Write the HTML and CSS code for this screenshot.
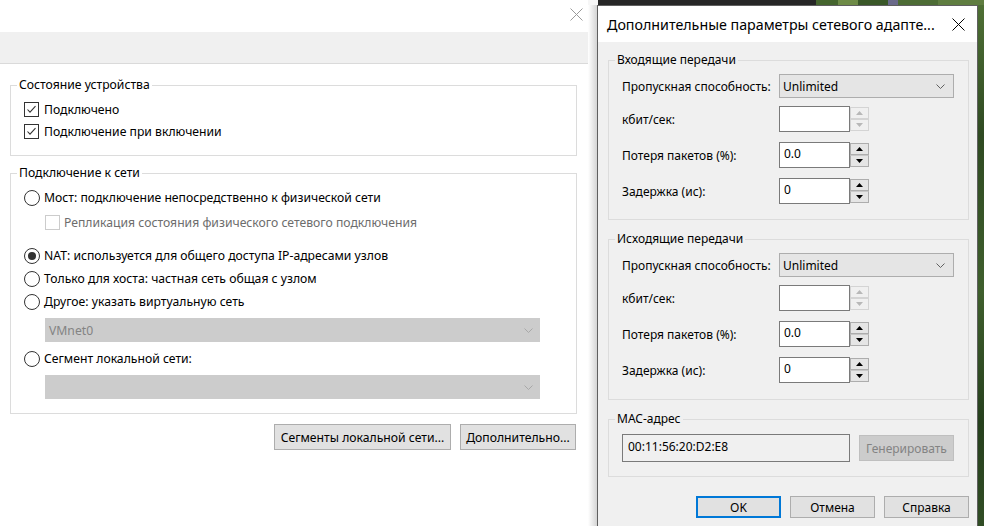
FILE: index.html
```html
<!DOCTYPE html>
<html lang="ru">
<head>
<meta charset="utf-8">
<title>Сетевой адаптер</title>
<link rel="stylesheet" href="styles.css">
</head>
<body>
<div class="screen">
  <section class="main-win">
    <div class="main-title">
      <svg class="x-icon x-gray" width="13" height="13" viewBox="0 0 13 13"><path d="M0.5 0.5 L12.5 12.5 M12.5 0.5 L0.5 12.5"/></svg>
    </div>
    <div class="main-band"></div>
    <div class="main-content">
      <fieldset class="grp grp-state">
        <legend>Состояние устройства</legend>
        <div class="grp-body state-body">
          <div class="opt"><span class="cb"><svg viewBox="0 0 13 13"><polyline points="2.5,6.5 5,9.2 10.5,3.2"/></svg></span><span>Подключено</span></div>
          <div class="opt"><span class="cb"><svg viewBox="0 0 13 13"><polyline points="2.5,6.5 5,9.2 10.5,3.2"/></svg></span><span>Подключение при включении</span></div>
        </div>
      </fieldset>
      <fieldset class="grp grp-net">
        <legend>Подключение к сети</legend>
        <div class="grp-body net-body">
          <div class="opt net-opt"><span class="rb"></span><span>Мост: подключение непосредственно к физической сети</span></div>
          <div class="opt net-opt sub dis"><span class="cb cb-dis"></span><span>Репликация состояния физического сетевого подключения</span></div>
          <div class="opt net-opt nat"><span class="rb rb-on"></span><span>NAT: используется для общего доступа IP-адресами узлов</span></div>
          <div class="opt net-opt"><span class="rb"></span><span>Только для хоста: частная сеть общая с узлом</span></div>
          <div class="opt net-opt"><span class="rb"></span><span>Другое: указать виртуальную сеть</span></div>
          <div class="combo combo-dis"><span>VMnet0</span><svg class="chev" width="9" height="5" viewBox="0 0 9 5"><polyline points="0.5,0.5 4.5,4.5 8.5,0.5"/></svg></div>
          <div class="opt net-opt seg"><span class="rb"></span><span>Сегмент локальной сети:</span></div>
          <div class="combo combo-dis"><span></span><svg class="chev" width="9" height="5" viewBox="0 0 9 5"><polyline points="0.5,0.5 4.5,4.5 8.5,0.5"/></svg></div>
        </div>
      </fieldset>
      <div class="main-btns">
        <button class="btn btn-seg">Сегменты локальной сети...</button>
        <button class="btn btn-more">Дополнительно...</button>
      </div>
    </div>
  </section>

  <div class="right">
    <div class="desk-top"></div>
    <div class="right-row">
      <div class="shadow"></div>
      <section class="dlg">
        <div class="dlg-title">
          <span>Дополнительные параметры сетевого адапте...</span>
          <svg class="x-icon" width="13" height="13" viewBox="0 0 13 13"><path d="M0.5 0.5 L12.5 12.5 M12.5 0.5 L0.5 12.5"/></svg>
        </div>
        <div class="dlg-body">
          <fieldset class="grp dgrp">
            <legend>Входящие передачи</legend>
            <div class="grp-body form-body">
              <div class="frow r-sel"><span class="flbl">Пропускная способность:</span>
                <div class="select"><span>Unlimited</span><svg class="chev dark" width="9" height="5" viewBox="0 0 9 5"><polyline points="0.5,0.5 4.5,4.5 8.5,0.5"/></svg></div>
              </div>
              <div class="frow"><span class="flbl">кбит/сек:</span>
                <div class="spin spin-dis"><div class="spin-input"></div><div class="spin-btns"><span class="sbtn"><svg width="7" height="4" viewBox="0 0 7 4"><polygon points="0,4 3.5,0 7,4"/></svg></span><span class="sbtn"><svg width="7" height="4" viewBox="0 0 7 4"><polygon points="0,0 7,0 3.5,4"/></svg></span></div></div>
              </div>
              <div class="frow"><span class="flbl">Потеря пакетов (%):</span>
                <div class="spin"><div class="spin-input">0.0</div><div class="spin-btns"><span class="sbtn"><svg width="7" height="4" viewBox="0 0 7 4"><polygon points="0,4 3.5,0 7,4"/></svg></span><span class="sbtn"><svg width="7" height="4" viewBox="0 0 7 4"><polygon points="0,0 7,0 3.5,4"/></svg></span></div></div>
              </div>
              <div class="frow"><span class="flbl">Задержка (ис):</span>
                <div class="spin"><div class="spin-input">0</div><div class="spin-btns"><span class="sbtn"><svg width="7" height="4" viewBox="0 0 7 4"><polygon points="0,4 3.5,0 7,4"/></svg></span><span class="sbtn"><svg width="7" height="4" viewBox="0 0 7 4"><polygon points="0,0 7,0 3.5,4"/></svg></span></div></div>
              </div>
            </div>
          </fieldset>

          <fieldset class="grp dgrp dgrp-out">
            <legend>Исходящие передачи</legend>
            <div class="grp-body form-body">
              <div class="frow r-sel"><span class="flbl">Пропускная способность:</span>
                <div class="select"><span>Unlimited</span><svg class="chev dark" width="9" height="5" viewBox="0 0 9 5"><polyline points="0.5,0.5 4.5,4.5 8.5,0.5"/></svg></div>
              </div>
              <div class="frow"><span class="flbl">кбит/сек:</span>
                <div class="spin spin-dis"><div class="spin-input"></div><div class="spin-btns"><span class="sbtn"><svg width="7" height="4" viewBox="0 0 7 4"><polygon points="0,4 3.5,0 7,4"/></svg></span><span class="sbtn"><svg width="7" height="4" viewBox="0 0 7 4"><polygon points="0,0 7,0 3.5,4"/></svg></span></div></div>
              </div>
              <div class="frow"><span class="flbl">Потеря пакетов (%):</span>
                <div class="spin"><div class="spin-input">0.0</div><div class="spin-btns"><span class="sbtn"><svg width="7" height="4" viewBox="0 0 7 4"><polygon points="0,4 3.5,0 7,4"/></svg></span><span class="sbtn"><svg width="7" height="4" viewBox="0 0 7 4"><polygon points="0,0 7,0 3.5,4"/></svg></span></div></div>
              </div>
              <div class="frow"><span class="flbl">Задержка (ис):</span>
                <div class="spin"><div class="spin-input">0</div><div class="spin-btns"><span class="sbtn"><svg width="7" height="4" viewBox="0 0 7 4"><polygon points="0,4 3.5,0 7,4"/></svg></span><span class="sbtn"><svg width="7" height="4" viewBox="0 0 7 4"><polygon points="0,0 7,0 3.5,4"/></svg></span></div></div>
              </div>
            </div>
          </fieldset>

          <fieldset class="grp dgrp dgrp-mac">
            <legend>MAC-адрес</legend>
            <div class="grp-body mac-body">
              <div class="mac-input">00:11:56:20:D2:E8</div>
              <button class="btn gen-btn">Генерировать</button>
            </div>
          </fieldset>

          <div class="dlg-btns">
            <button class="btn dbtn dbtn-default">OK</button>
            <button class="btn dbtn">Отмена</button>
            <button class="btn dbtn">Справка</button>
          </div>
        </div>
      </section>
      <div class="desk-right"></div>
    </div>
  </div>
</div>
</body>
</html>
```

FILE: styles.css
```css
* { box-sizing: border-box; }
html, body { margin: 0; padding: 0; }
body {
  width: 984px;
  height: 526px;
  overflow: hidden;
  font-family: "Noto Sans", "Segoe UI", sans-serif;
  font-size: 12px;
  color: #000;
  background: #fff;
}
.screen { display: flex; width: 984px; height: 526px; }

/* ---------- main window ---------- */
.main-win {
  width: 588px;
  height: 526px;
  flex: none;
  background: #fff;
  display: flex;
  flex-direction: column;
}
.main-title {
  height: 32px;
  display: flex;
  justify-content: flex-end;
  padding: 8px 5px 0 0;
}
.x-icon { display: block; fill: none; stroke: #000; stroke-width: 1; }
.x-gray { stroke: #9a9a9a; }
.main-band { height: 32px; background: #f0f0f0; border-bottom: 1px solid #dadada; }
.main-content { padding: 13px 11px 0 10px; font-size: 12.2px; }

.grp {
  margin: 0;
  padding: 0;
  border: 1px solid #dcdcdc;
  min-inline-size: 0;
}
.grp legend {
  padding: 0 2px;
  margin-left: 6px;
  line-height: 16px;
}
.state-body { padding: 5px 0 13px 13px; }
.opt { display: flex; align-items: center; gap: 5px; height: 22px; white-space: nowrap; }

.cb {
  width: 15px;
  height: 15px;
  flex: none;
  border: 1px solid #333;
  background: #fff;
  display: flex;
}
.cb svg { width: 13px; height: 13px; fill: none; stroke: #333; stroke-width: 1.1; }
.cb-dis { border-color: #cccccc; }
.rb {
  width: 16px;
  height: 16px;
  flex: none;
  border: 1px solid #333;
  border-radius: 50%;
  background: #fff;
  display: flex;
  align-items: center;
  justify-content: center;
}
.rb-on::after { content: ""; width: 8px; height: 8px; border-radius: 50%; background: #333; }

.grp-net { margin-top: 9px; }
.net-body { padding: 5px 0 14px 13px; }
.net-opt { height: 23px; gap: 4px; }
.sub { margin-left: 21px; margin-top: 2px; }
.dis { color: #6d6d6d; }
.nat { margin-top: 10px; }
.seg { margin-top: 5px; }
.combo {
  margin: 5px 0 0 21px;
  width: 495px;
  height: 24px;
  display: flex;
  align-items: center;
  justify-content: space-between;
  padding: 0 6px 0 3px;
}
.combo-dis { background: #cccccc; border: 1px solid #cccccc; color: #838383; }
.chev { display: block; fill: none; stroke: #a8a8a8; stroke-width: 1; }
.chev.dark { stroke: #606060; }

.main-btns { display: flex; justify-content: flex-end; gap: 9px; margin-top: 10px; padding-right: 1px; }
.btn {
  font: inherit;
  color: #000;
  background: #e1e1e1;
  border: 1px solid #adadad;
  padding: 0;
  height: 26px;
  white-space: nowrap;
}
.btn-seg { width: 177px; }
.btn-more { width: 116px; }

/* ---------- desktop + dialog ---------- */
.right { width: 396px; flex: none; display: flex; flex-direction: column; }
.desk-top {
  height: 5px;
  flex: none;
  background: linear-gradient(90deg, #f6f6f6 0 10px, #262626 10px 228px, #45652e 228px 250px, #6e8b47 250px 270px, #3a5828 270px 300px, #6a6a8a 300px 310px, #4d6c35 310px 350px, #5f7d40 350px 396px);
}
.right-row { flex: 1; display: flex; min-height: 0; }
.shadow { width: 9px; flex: none; background: linear-gradient(90deg, #ffffff, #ececec 45%, #d4d4d4); }
.desk-right {
  width: 6px;
  flex: none;
  background: linear-gradient(180deg, #4f7035, #2f4a22 25%, #3f5f2d 55%, #26401d 80%, #314d25);
}
.dlg {
  width: 381px;
  flex: none;
  border: 1px solid #5f5f5f;
  border-bottom: none;
  background: #f0f0f0;
  display: flex;
  flex-direction: column;
}
.dlg-title {
  height: 36px;
  flex: none;
  background: #fff;
  display: flex;
  align-items: center;
  justify-content: space-between;
  padding: 0 12px 0 9px;
  font-size: 14.25px;
  white-space: nowrap;
}
.dlg-body { padding: 10px 8px 0 10px; }
.dgrp + .dgrp { margin-top: 11px; }
.form-body { padding: 6px 0 15px 13px; }
.dgrp-out .form-body { padding-bottom: 16px; }
.frow { display: flex; align-items: center; }
.frow + .frow { margin-top: 10px; }
.r-sel + .frow { margin-top: 8px; }
.flbl { width: 157px; flex: none; white-space: nowrap; }

.select {
  width: 175px;
  height: 24px;
  background: #e5e5e5;
  border: 1px solid #adadad;
  display: flex;
  align-items: center;
  justify-content: space-between;
  padding: 0 8px 0 3px;
}
.spin { display: flex; width: 90px; height: 26px; }
.spin-input {
  width: 71px;
  height: 26px;
  border: 1px solid #7a7a7a;
  background: #fff;
  padding: 3px 4px;
  line-height: 16px;
}
.spin-btns { width: 19px; display: flex; flex-direction: column; padding: 1px 0; }
.sbtn {
  flex: 1;
  border: 1px solid #adadad;
  background: #e5e5e5;
  display: flex;
  align-items: center;
  justify-content: center;
}
.sbtn + .sbtn { border-top-color: #c8c8c8; }
.sbtn svg { display: block; fill: #000; }
.spin-dis .sbtn { border-color: #d4d4d4; background: #f0f0f0; }
.spin-dis .sbtn svg { fill: #b8b8b8; }

.mac-body { display: flex; align-items: flex-start; padding: 7px 0 14px 13px; }
.mac-input {
  width: 228px;
  height: 28px;
  border: 1px solid #7a7a7a;
  background: #f0f0f0;
  padding: 4px 5px;
  line-height: 16px;
}
.gen-btn {
  margin: 1px 0 0 9px;
  width: 95px;
  height: 26px;
  background: #cccccc;
  border-color: #bfbfbf;
  color: #838383;
}
.dlg-btns { display: flex; justify-content: flex-end; gap: 9px; margin-top: 19px; }
.dbtn { width: 85px; height: 22px; }
.dbtn-default { border-color: #0078d7; box-shadow: inset 0 0 0 1px #0078d7; }
```
